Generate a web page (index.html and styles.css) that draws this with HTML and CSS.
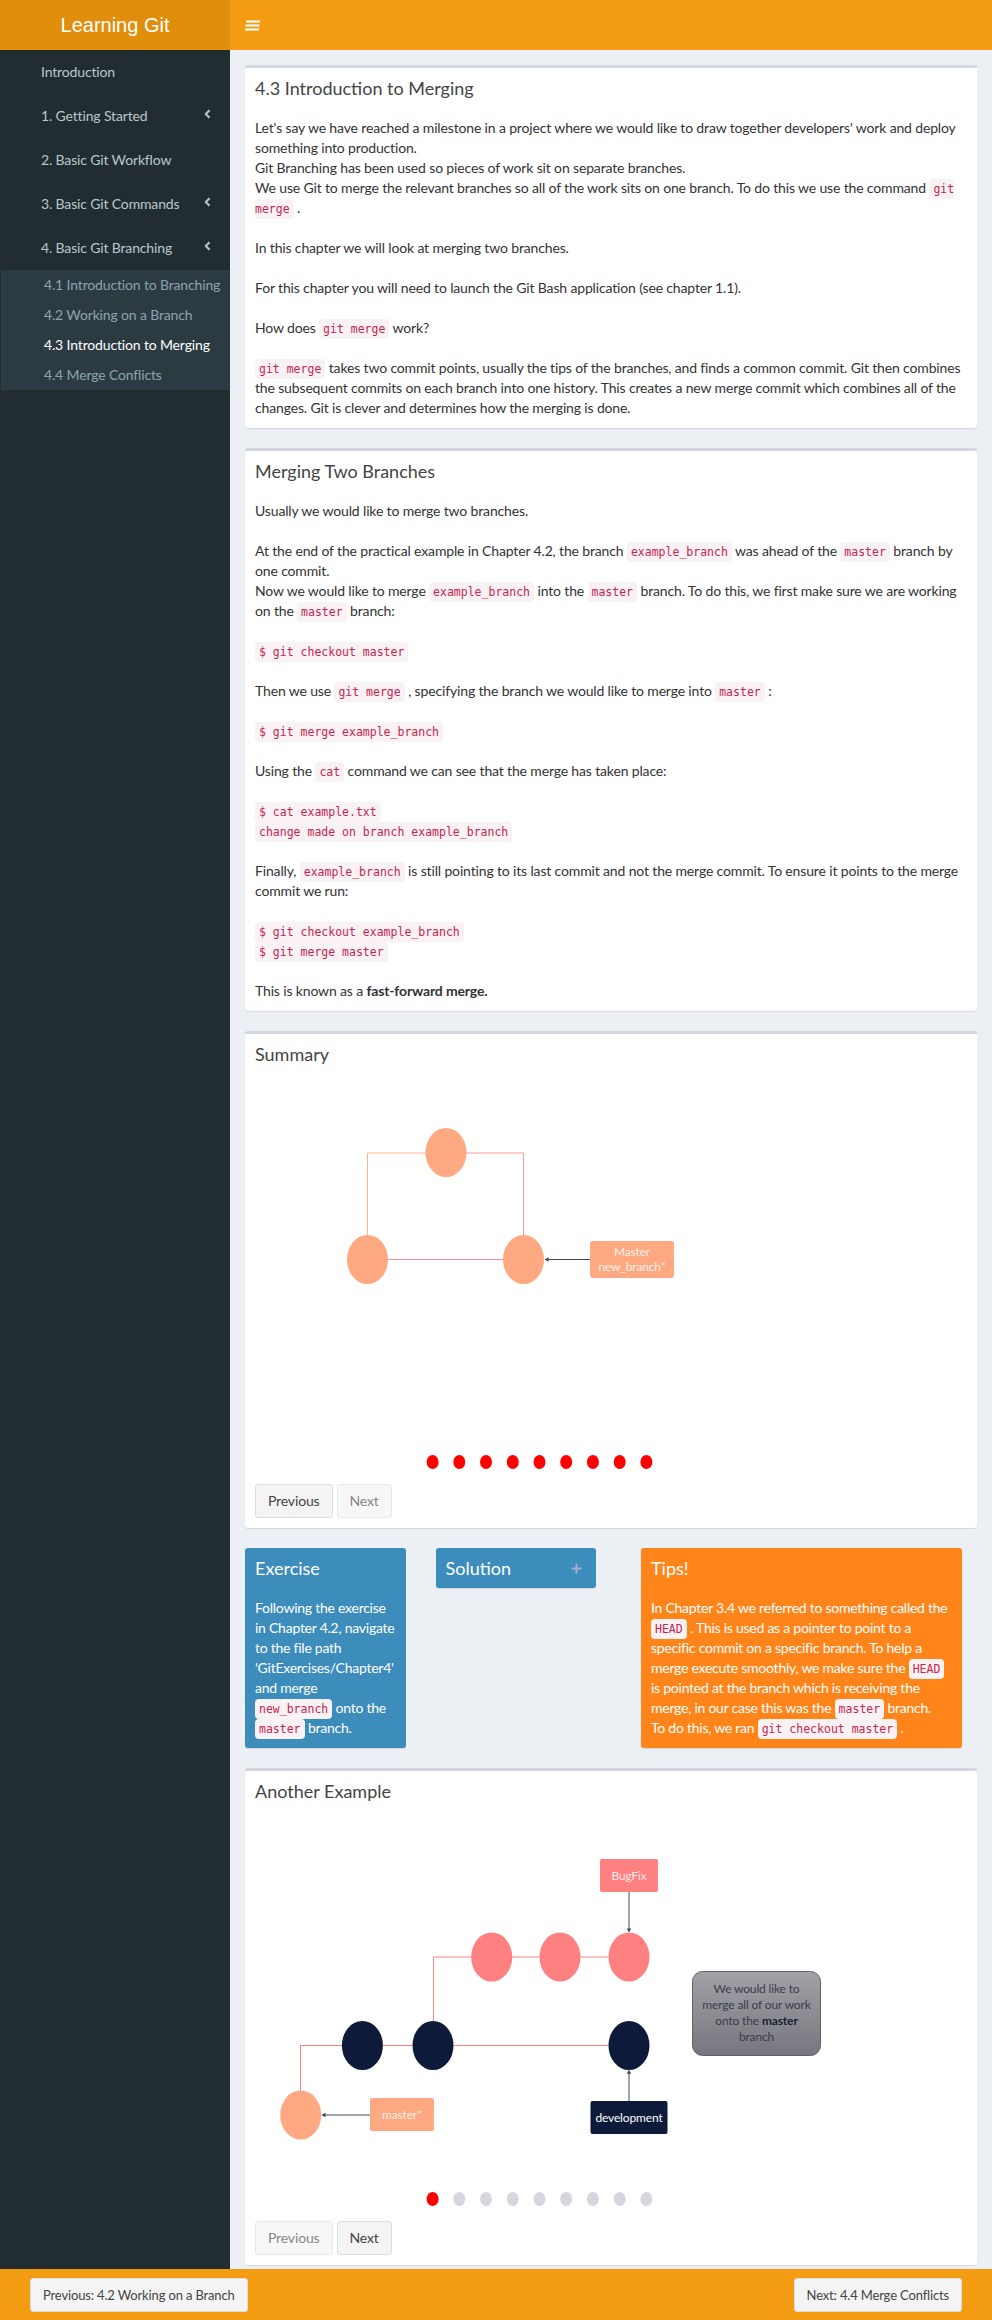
FILE: index.html
```html
<!DOCTYPE html>
<html lang="en">
<head>
<meta charset="utf-8">
<title>Learning Git</title>
<link rel="stylesheet" href="styles.css">
</head>
<body>
<header class="topbar">
  <div class="logo">Learning Git</div>
  <nav class="navbar">
    <svg class="burger" width="15" height="11" viewBox="0 0 15 11"><rect x="1" y="0.5" width="14" height="2"/><rect x="0.5" y="4.5" width="14" height="2"/><rect x="0" y="8.5" width="14" height="2"/></svg>
  </nav>
</header>
<div class="wrapper">
  <aside class="sidebar">
    <ul class="menu">
      <li><a class="item">Introduction</a></li>
      <li><a class="item">1. Getting Started<svg class="chev" width="7" height="10" viewBox="0 0 7 10"><path d="M5.5 1.2 L1.8 5 L5.5 8.8"/></svg></a></li>
      <li><a class="item">2. Basic Git Workflow</a></li>
      <li><a class="item">3. Basic Git Commands<svg class="chev" width="7" height="10" viewBox="0 0 7 10"><path d="M5.5 1.2 L1.8 5 L5.5 8.8"/></svg></a></li>
      <li><a class="item">4. Basic Git Branching<svg class="chev" width="7" height="10" viewBox="0 0 7 10"><path d="M5.5 1.2 L1.8 5 L5.5 8.8"/></svg></a>
        <ul class="submenu">
          <li><a>4.1 Introduction to Branching</a></li>
          <li><a>4.2 Working on a Branch</a></li>
          <li class="active"><a>4.3 Introduction to Merging</a></li>
          <li><a>4.4 Merge Conflicts</a></li>
        </ul>
      </li>
    </ul>
  </aside>
  <main class="content">
    <section class="box">
      <div class="box-header"><h3 class="box-title">4.3 Introduction to Merging</h3></div>
      <div class="box-body text">
        <p>Let's say we have reached a milestone in a project where we would like to draw together developers' work and deploy<br>something into production.<br>Git Branching has been used so pieces of work sit on separate branches.<br>We use Git to merge the relevant branches so all of the work sits on one branch. To do this we use the command <code>git<br>merge</code> .</p>
        <p>In this chapter we will look at merging two branches.</p>
        <p>For this chapter you will need to launch the Git Bash application (see chapter 1.1).</p>
        <p>How does <code>git merge</code> work?</p>
        <p><code>git merge</code> takes two commit points, usually the tips of the branches, and finds a common commit. Git then combines<br>the subsequent commits on each branch into one history. This creates a new merge commit which combines all of the<br>changes. Git is clever and determines how the merging is done.</p>
      </div>
    </section>

    <section class="box">
      <div class="box-header"><h3 class="box-title">Merging Two Branches</h3></div>
      <div class="box-body text">
        <p>Usually we would like to merge two branches.</p>
        <p>At the end of the practical example in Chapter 4.2, the branch <code>example_branch</code> was ahead of the <code>master</code> branch by<br>one commit.<br>Now we would like to merge <code>example_branch</code> into the <code>master</code> branch. To do this, we first make sure we are working<br>on the <code>master</code> branch:</p>
        <p><code>$ git checkout master</code></p>
        <p>Then we use <code>git merge</code> , specifying the branch we would like to merge into <code>master</code> :</p>
        <p><code>$ git merge example_branch</code></p>
        <p>Using the <code>cat</code> command we can see that the merge has taken place:</p>
        <p><code>$ cat example.txt</code><br><code>change made on branch example_branch</code></p>
        <p>Finally, <code>example_branch</code> is still pointing to its last commit and not the merge commit. To ensure it points to the merge<br>commit we run:</p>
        <p><code>$ git checkout example_branch</code><br><code>$ git merge master</code></p>
        <p>This is known as a <b>fast-forward merge.</b></p>
      </div>
    </section>

    <section class="box">
      <div class="box-header"><h3 class="box-title">Summary</h3></div>
      <div class="box-body">
        <svg class="diagram" width="712" height="400" viewBox="0 0 712 400">
          <path d="M112.5 151 V69 H171" fill="none" stroke="#ffb294" stroke-width="1"/>
          <path d="M211 69 H268.5 V151" fill="none" stroke="#ff9a9a" stroke-width="1"/>
          <path d="M133 175.5 H248" fill="none" stroke="#ff8f8f" stroke-width="1"/>
          <ellipse cx="191" cy="68.5" rx="20.5" ry="24.5" fill="#ffa982"/>
          <ellipse cx="112.5" cy="175.5" rx="20.5" ry="24.5" fill="#ffa982"/>
          <ellipse cx="268.5" cy="175.5" rx="20.5" ry="24.5" fill="#ffa982"/>
          <path d="M335 175.5 H293" stroke="#3c4858" stroke-width="1"/>
          <path d="M289.5 175.5 L293.5 173.3 L293.5 177.7 Z" fill="#3c4858"/>
          <rect x="335" y="157" width="84" height="37" rx="3" fill="#ffa982"/>
          <text class="lbl" x="377" y="172">Master</text>
          <text class="lbl" x="377" y="187">new_branch*</text>
          <g fill="#ff0000">
            <ellipse cx="177.6" cy="378" rx="6" ry="7"/>
            <ellipse cx="204.3" cy="378" rx="6" ry="7"/>
            <ellipse cx="231" cy="378" rx="6" ry="7"/>
            <ellipse cx="257.8" cy="378" rx="6" ry="7"/>
            <ellipse cx="284.5" cy="378" rx="6" ry="7"/>
            <ellipse cx="311.2" cy="378" rx="6" ry="7"/>
            <ellipse cx="337.9" cy="378" rx="6" ry="7"/>
            <ellipse cx="364.7" cy="378" rx="6" ry="7"/>
            <ellipse cx="391.4" cy="378" rx="6" ry="7"/>
          </g>
        </svg>
        <div class="pager">
          <a class="btn">Previous</a>
          <a class="btn disabled">Next</a>
        </div>
      </div>
    </section>

    <div class="cols">
      <div class="col">
        <section class="box solid blue">
          <div class="box-header"><h3 class="box-title">Exercise</h3></div>
          <div class="box-body">Following the exercise<br>in Chapter 4.2, navigate<br>to the file path<br>'GitExercises/Chapter4'<br>and merge<br><code>new_branch</code> onto the<br><code>master</code> branch.</div>
        </section>
      </div>
      <div class="col">
        <section class="box solid blue">
          <div class="box-header split"><h3 class="box-title">Solution</h3>
            <svg class="plus" width="11" height="11" viewBox="0 0 11 11"><path d="M5.5 0.5 V10.5 M0.5 5.5 H10.5"/></svg>
          </div>
        </section>
      </div>
      <div class="col col-wide">
        <section class="box solid orange">
          <div class="box-header"><h3 class="box-title">Tips!</h3></div>
          <div class="box-body">In Chapter 3.4 we referred to something called the<br><code>HEAD</code> . This is used as a pointer to point to a<br>specific commit on a specific branch. To help a<br>merge execute smoothly, we make sure the <code>HEAD</code><br>is pointed at the branch which is receiving the<br>merge, in our case this was the <code>master</code> branch.<br>To do this, we ran <code>git checkout master</code> .</div>
        </section>
      </div>
    </div>

    <section class="box last">
      <div class="box-header"><h3 class="box-title">Another Example</h3></div>
      <div class="box-body">
        <svg class="diagram" width="712" height="400" viewBox="0 0 712 400">
          <defs>
            <linearGradient id="note" x1="0" y1="0" x2="0" y2="1">
              <stop offset="0" stop-color="#a2a2a8"/>
              <stop offset="1" stop-color="#76767e"/>
            </linearGradient>
          </defs>
          <g fill="none" stroke="#ff8080" stroke-width="1">
            <path d="M216.5 136 H178.6 V200"/>
            <path d="M257 136 H284.5"/>
            <path d="M325.5 136 H353.5"/>
            <path d="M87 224.5 H45.5 V270"/>
            <path d="M128 224.5 H157.5"/>
            <path d="M198.5 224.5 H353.5"/>
          </g>
          <g fill="#ff8080">
            <ellipse cx="236.7" cy="136" rx="20.5" ry="24.5"/>
            <ellipse cx="305" cy="136" rx="20.5" ry="24.5"/>
            <ellipse cx="374" cy="136" rx="20.5" ry="24.5"/>
          </g>
          <g fill="#0d1a3a">
            <ellipse cx="107.4" cy="224.5" rx="20.5" ry="24.5"/>
            <ellipse cx="178" cy="224.5" rx="20.5" ry="24.5"/>
            <ellipse cx="374" cy="224.5" rx="20.5" ry="24.5"/>
          </g>
          <ellipse cx="45.7" cy="294" rx="20.5" ry="24.5" fill="#ffa982"/>

          <rect x="345" y="38" width="58" height="33" rx="2" fill="#ff8080"/>
          <text class="lbl" x="374" y="59">BugFix</text>
          <path d="M374 71 V108" stroke="#3c4858" stroke-width="1"/>
          <path d="M374 111.5 L371.8 107.5 L376.2 107.5 Z" fill="#3c4858"/>

          <rect x="115" y="277" width="64" height="33" rx="2" fill="#ffa982"/>
          <text class="lbl" x="147" y="298">master*</text>
          <path d="M115 294 H70" stroke="#3c4858" stroke-width="1"/>
          <path d="M66.5 294 L70.5 291.8 L70.5 296.2 Z" fill="#3c4858"/>

          <rect x="335.5" y="280" width="77" height="33" rx="2" fill="#0d1a3a"/>
          <text class="lbl dev" x="374" y="301">development</text>
          <path d="M374 280 V252" stroke="#3c4858" stroke-width="1"/>
          <path d="M374 248.8 L371.8 252.8 L376.2 252.8 Z" fill="#3c4858"/>

          <rect x="437.5" y="150.5" width="128" height="84" rx="10" fill="url(#note)" stroke="#60606a" stroke-width="1"/>
          <text class="note" x="501.5" y="172">We would like to</text>
          <text class="note" x="501.5" y="188">merge all of our work</text>
          <text class="note" x="501.5" y="204">onto the <tspan class="strong">master</tspan></text>
          <text class="note" x="501.5" y="220">branch</text>

          <g fill="#d6d6de">
            <ellipse cx="177.6" cy="378" rx="6" ry="7" fill="#ff0000"/>
            <ellipse cx="204.3" cy="378" rx="6" ry="7"/>
            <ellipse cx="231" cy="378" rx="6" ry="7"/>
            <ellipse cx="257.8" cy="378" rx="6" ry="7"/>
            <ellipse cx="284.5" cy="378" rx="6" ry="7"/>
            <ellipse cx="311.2" cy="378" rx="6" ry="7"/>
            <ellipse cx="337.9" cy="378" rx="6" ry="7"/>
            <ellipse cx="364.7" cy="378" rx="6" ry="7"/>
            <ellipse cx="391.4" cy="378" rx="6" ry="7"/>
          </g>
        </svg>
        <div class="pager">
          <a class="btn disabled">Previous</a>
          <a class="btn">Next</a>
        </div>
      </div>
    </section>
  </main>
</div>
<footer class="footer">
  <a class="btn small">Previous: 4.2 Working on a Branch</a>
  <a class="btn small">Next: 4.4 Merge Conflicts</a>
</footer>
</body>
</html>
```
FILE: styles.css
```css
* { box-sizing: border-box; }
html, body { margin: 0; padding: 0; }
body {
  font-family: Lato, "Noto Sans", sans-serif;
  font-size: 14px;
  line-height: 20px;
  letter-spacing: -0.15px;
  color: #333;
  background: #ecf0f5;
}

/* header */
.topbar { display: flex; height: 50px; }
.logo {
  width: 230px;
  flex: none;
  background: #e08e0b;
  color: #fff;
  font-family: "Liberation Sans", Arial, sans-serif;
  font-size: 20px;
  line-height: 50px;
  letter-spacing: 0;
  text-align: center;
}
.navbar {
  flex: 1;
  background: #f39c12;
  display: flex;
  align-items: center;
  padding-left: 15px;
}
.burger { fill: #fff; display: block; }

/* layout */
.wrapper { display: flex; align-items: stretch; }
.sidebar { width: 230px; flex: none; background: #222d32; }
.content { flex: 1; min-width: 0; padding: 15px 15px 0; }

/* sidebar */
.menu, .submenu { list-style: none; margin: 0; padding: 0; }
.menu .item {
  display: flex;
  justify-content: space-between;
  align-items: center;
  padding: 12px 19px 12px 41px;
  color: #b8c7ce;
  line-height: 20px;
}
.chev { display: block; margin-top: -4px; }
.chev path { fill: none; stroke: #b8c7ce; stroke-width: 2; }
.submenu { background: #2c3b41; margin-left: 1px; }
.submenu a {
  display: block;
  padding: 5px 0 5px 43px;
  color: #8aa4af;
  white-space: nowrap;
}
.submenu .active a { color: #fff; }

/* boxes */
.box {
  background: #fff;
  border-top: 3px solid #d2d6de;
  border-radius: 3px;
  box-shadow: 0 1px 1px rgba(0, 0, 0, 0.1);
  margin-bottom: 20px;
}
.box.last { margin-bottom: 4px; }
.box-header { padding: 10px; }
.box-title {
  margin: 0;
  font-size: 18px;
  line-height: 20px;
  font-weight: 400;
  letter-spacing: 0;
  color: #444;
}
.box-body { padding: 10px; }
.text p { margin: 0 0 20px; white-space: nowrap; }
.text p:last-child { margin-bottom: 0; }

code {
  font-family: "DejaVu Sans Mono", "Liberation Mono", monospace;
  font-size: 11.5px;
  line-height: 1;
  letter-spacing: 0;
  padding: 3px 4px;
  color: #c7254e;
  background: #f9f2f4;
  border-radius: 4px;
}

.diagram { display: block; }
.lbl {
  font-family: Lato, "Noto Sans", sans-serif;
  font-size: 12px;
  fill: #fff;
  fill-opacity: 0.85;
  text-anchor: middle;
}
.lbl.dev { fill-opacity: 1; }
.note {
  font-family: Lato, "Noto Sans", sans-serif;
  font-size: 12px;
  fill: #3a3c4a;
  text-anchor: middle;
}
.strong { font-weight: 700; fill: #1b2033; }

.pager { display: flex; gap: 4px; }
.btn {
  display: inline-block;
  padding: 6px 12px;
  border: 1px solid #ddd;
  border-radius: 3px;
  background: #f4f4f4;
  color: #444;
  line-height: 20px;
  font-size: 14px;
  white-space: nowrap;
}
.btn.disabled { opacity: 0.65; }
.btn.small { font-size: 13px; }

/* colored boxes */
.cols {
  display: grid;
  grid-template-columns: minmax(0, 1fr) minmax(0, 1fr) minmax(0, 2fr);
  align-items: start;
  margin: 0 -15px;
}
.col { padding: 0 15px; min-width: 0; }
.col-wide { padding: 0 30px; }
.box.solid { border-top: 0; color: #fff; }
.box.solid .box-title { color: #fff; }
.box.solid .box-body { white-space: nowrap; letter-spacing: -0.25px; }
.blue { background: #3c8dbc; }
.orange { background: #ff851b; }
.split { display: flex; justify-content: space-between; align-items: center; }
.plus { display: block; margin-right: 4px; }
.plus path { stroke: #a2b2c6; stroke-width: 2; fill: none; }

/* footer */
.footer {
  width: 100%;
  height: 51px;
  background: #f39c12;
  display: flex;
  justify-content: space-between;
  align-items: flex-start;
  padding: 9px 30px 0;
}
```
